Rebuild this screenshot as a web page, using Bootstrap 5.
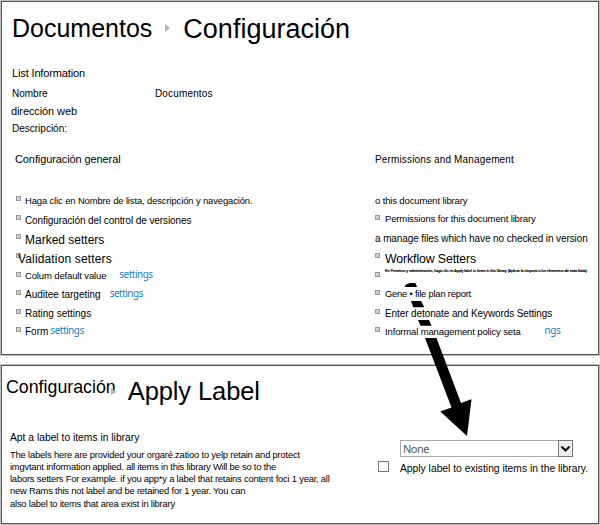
<!DOCTYPE html>
<html lang="es">
<head>
<meta charset="utf-8">
<title>Documentos - Configuración</title>
<link href="https://cdn.jsdelivr.net/npm/bootstrap@5.3.0/dist/css/bootstrap.min.css" rel="stylesheet">
<style>
body{font-family:"Liberation Sans",Arial,sans-serif;color:#000;background:#fff;overflow:hidden}
.page{width:600px;height:525px;padding:1px}
.panel{width:598px;border:1px solid #555;box-shadow:0 0 0 1px #c0c0c0}
.panel-top{height:354px}
.panel-bottom{height:159px;margin-top:10px}
.ln{display:flex;align-items:flex-end;white-space:nowrap}
/* text baseline sits 2px above the bottom of every line */
.t{display:block;font-size:10px;line-height:calc(4px + .693em);flex:none;white-space:nowrap}
.h11{height:11px}.h12{height:12px}.h13{height:13px}.h16{height:16px}.h17{height:17px}.h18{height:18px}.h19{height:19px}
.h20{height:20px}.h21{height:21px}.h23{height:23px}.h31{height:31px}.h37{height:37px}.h39{height:39px}.h40{height:40px}.h41{height:41px}
.col-l{width:360px;flex:none;padding-left:14px}
.col-r{padding-left:13px}
.col-r .bl{margin-right:5px}
.col-fields{width:143px}
.bl{width:5px;height:5px;border:1px solid #9a9a9a;background:#d0d0d0;flex:none;margin:0 4px 6px 0}
.b0{margin-bottom:0}.b5{margin-bottom:5px}.b7{margin-bottom:7px}.b8{margin-bottom:8px}
.blue{font-family:"Noto Sans","Open Sans",sans-serif;color:#1b7fc9;font-size:10px;line-height:14px;letter-spacing:-.5px;margin-bottom:1px}
.s94{font-size:9.4px}.s95{font-size:9.5px}.s103{font-size:10.3px}.s11{font-size:11px}
.s12{font-size:12px;margin-bottom:1px}.s123{font-size:12.3px}
.s178{font-size:17.8px}.s25{font-size:25px}.s255{font-size:25.5px}.s27{font-size:27px}
.k1{letter-spacing:-.1px}.k2{letter-spacing:-.14px}.k3{letter-spacing:-.18px}.k4{letter-spacing:-.21px}.w1{letter-spacing:.15px}
.crumb{margin:0 0 2px 10px}
.sep{margin:0 0 9px 13px}
.crumb-current{margin-left:13px}
.info{padding-left:10px}
.addr{margin-left:-1px}
.group-title{margin-left:-1px}
.valid{margin-left:-7px}
.g1{margin-left:13px}.g2{margin-left:9px}.g3{margin-left:2px}.g4{margin-left:24px}
.tiny{font-size:3.6px;line-height:4px;margin-bottom:4px;-webkit-text-stroke:.2px #000}
.info-col{width:376px;margin-right:-376px;padding-left:8px}
.conf2{margin:0 0 8px -4px}
.sep2{margin:0 12px 8px -5px}
.label-form{padding-top:74px;margin-left:376px}
.pick{width:173px;height:17px;margin-left:22px;border:1px solid #aaa;font:11px/15px "Noto Sans","Open Sans",sans-serif;letter-spacing:-.5px;color:#555}
.pick-value{padding-left:2px}
.pick-btn{width:15px;height:17px;margin:-1px;border:1px solid #777;background:#eee}
.cbx{width:11px;height:11px;border:1px solid #777;margin:0 11px 2px 0}
.arrow{left:0;top:0;pointer-events:none}
</style>
<script src="https://cdn.jsdelivr.net/npm/bootstrap@5.3.0/dist/js/bootstrap.bundle.min.js"></script>
</head>
<body>
<main class="page position-relative">
<section class="panel panel-top">
  <div class="ln h39">
    <h1 class="t s25 fw-normal crumb">Documentos</h1>
    <svg class="sep" width="5" height="8"><path d="M0 0L5 4L0 8Z" fill="#b5b5b5"/></svg>
    <span class="t s27 crumb-current">Configuración</span>
  </div>
  <div class="info">
    <div class="ln h39"><span class="t s11 k2">List Information</span></div>
    <div class="ln h20"><span class="t col-fields">Nombre</span><span class="t w1">Documentos</span></div>
    <div class="ln h18"><span class="t s11 k1 addr">dirección web</span></div>
    <div class="ln h17"><span class="t">Descripción:</span></div>
  </div>
  <div class="d-flex">
    <div class="col-l">
      <div class="ln h31 group-title"><span class="t s11 k1">Configuración general</span></div>
      <div class="ln h41"><i class="bl"></i><span class="t s94 k1">Haga clic en Nombre de lista, descripción y navegación.</span></div>
      <div class="ln h20"><i class="bl b7"></i><span class="t k1">Configuración del control de versiones</span></div>
      <div class="ln h20"><i class="bl b8"></i><span class="t s12">Marked setters</span></div>
      <div class="ln h19"><i class="bl b8"></i><span class="t s12 w1 valid">Validation setters</span></div>
      <div class="ln h16"><i class="bl b5"></i><span class="t s95 k2">Colum default value</span><span class="blue g1">settings</span></div>
      <div class="ln h19"><i class="bl"></i><span class="t">Auditee targeting</span><span class="blue g2">settings</span></div>
      <div class="ln h19"><i class="bl"></i><span class="t">Rating settings</span></div>
      <div class="ln h18"><i class="bl"></i><span class="t">Form</span><span class="blue g3">settings</span></div>
    </div>
    <div class="col-r">
      <div class="ln h31"><span class="t w1">Permissions and Management</span></div>
      <div class="ln h41"><span class="t s95 k2">o this document library</span></div>
      <div class="ln h18"><i class="bl b5"></i><span class="t s95 k2">Permissions for this document library</span></div>
      <div class="ln h20"><span class="t k1">a manage files which have no checked in version</span></div>
      <div class="ln h21"><i class="bl b8"></i><span class="t s123 k1">Workflow Setters</span></div>
      <div class="ln h11"><i class="bl b0"></i><span class="t tiny">En Permisos y administración, haga clic en Apply label to items in this library (Aplicar la etiqueta a los elementos <b>de esta lista).</b></span></div>
      <div class="ln h23"><i class="bl b5"></i><span class="t s94 k4">Gene • file plan report</span></div>
      <div class="ln h20"><i class="bl"></i><span class="t k1">Enter detonate and Keywords Settings</span></div>
      <div class="ln h18"><i class="bl"></i><span class="t s95 k2">Informal management policy seta</span><span class="blue g4">ngs</span></div>
    </div>
  </div>
</section>
<section class="panel panel-bottom d-flex">
  <div class="info-col">
    <div class="ln h37">
      <span class="t s178 conf2">Configuración</span>
      <svg class="sep2" width="5" height="7"><path d="M0 0L5 3.5L0 7Z" fill="#b5b5b5"/></svg>
      <h2 class="t s255 k1 fw-normal mb-0">Apply Label</h2>
    </div>
    <div class="ln h40"><span class="t s103">Apt a label to items in library</span></div>
    <div class="ln h18"><span class="t s94 k3">The labels here are provided your orgaré.zatioo to yelp retain and protect</span></div>
    <div class="ln h12"><span class="t s94 k4">imgvtant information applied. all items in this library Will be so to the</span></div>
    <div class="ln h12"><span class="t s94 k4">labors setters For example. if you app*y a label that retains content foci 1 year, all</span></div>
    <div class="ln h12"><span class="t s94 k4">new Rams this not label and be retained for 1 year. You can</span></div>
    <div class="ln h13"><span class="t s94 k4">also label to items that area exist in library</span></div>
  </div>
  <div class="label-form">
    <div class="pick d-flex justify-content-between"><span class="pick-value">None</span>
      <span class="pick-btn"><svg class="d-block" width="13" height="15"><path d="M2.5 5.5L6.5 9.5L10.5 5.5" fill="none" stroke="#111" stroke-width="2.2"/></svg></span></div>
    <div class="ln h17"><i class="cbx"></i><span class="t s103">Apply label to existing items in the library.</span></div>
  </div>
</section>
<svg class="arrow position-absolute" width="600" height="525">
  <path d="M404.5 287L406 284.5L410 283L415.5 283L417 287ZM411 301H421L424.3 307.3H413.3ZM418 320H429L431.5 325.7H420.5ZM425 338H436.5L461 403L471.5 399.3L467 436L440.3 411.5L451.5 407.5Z"/>
</svg>
</main>
</body>
</html>
